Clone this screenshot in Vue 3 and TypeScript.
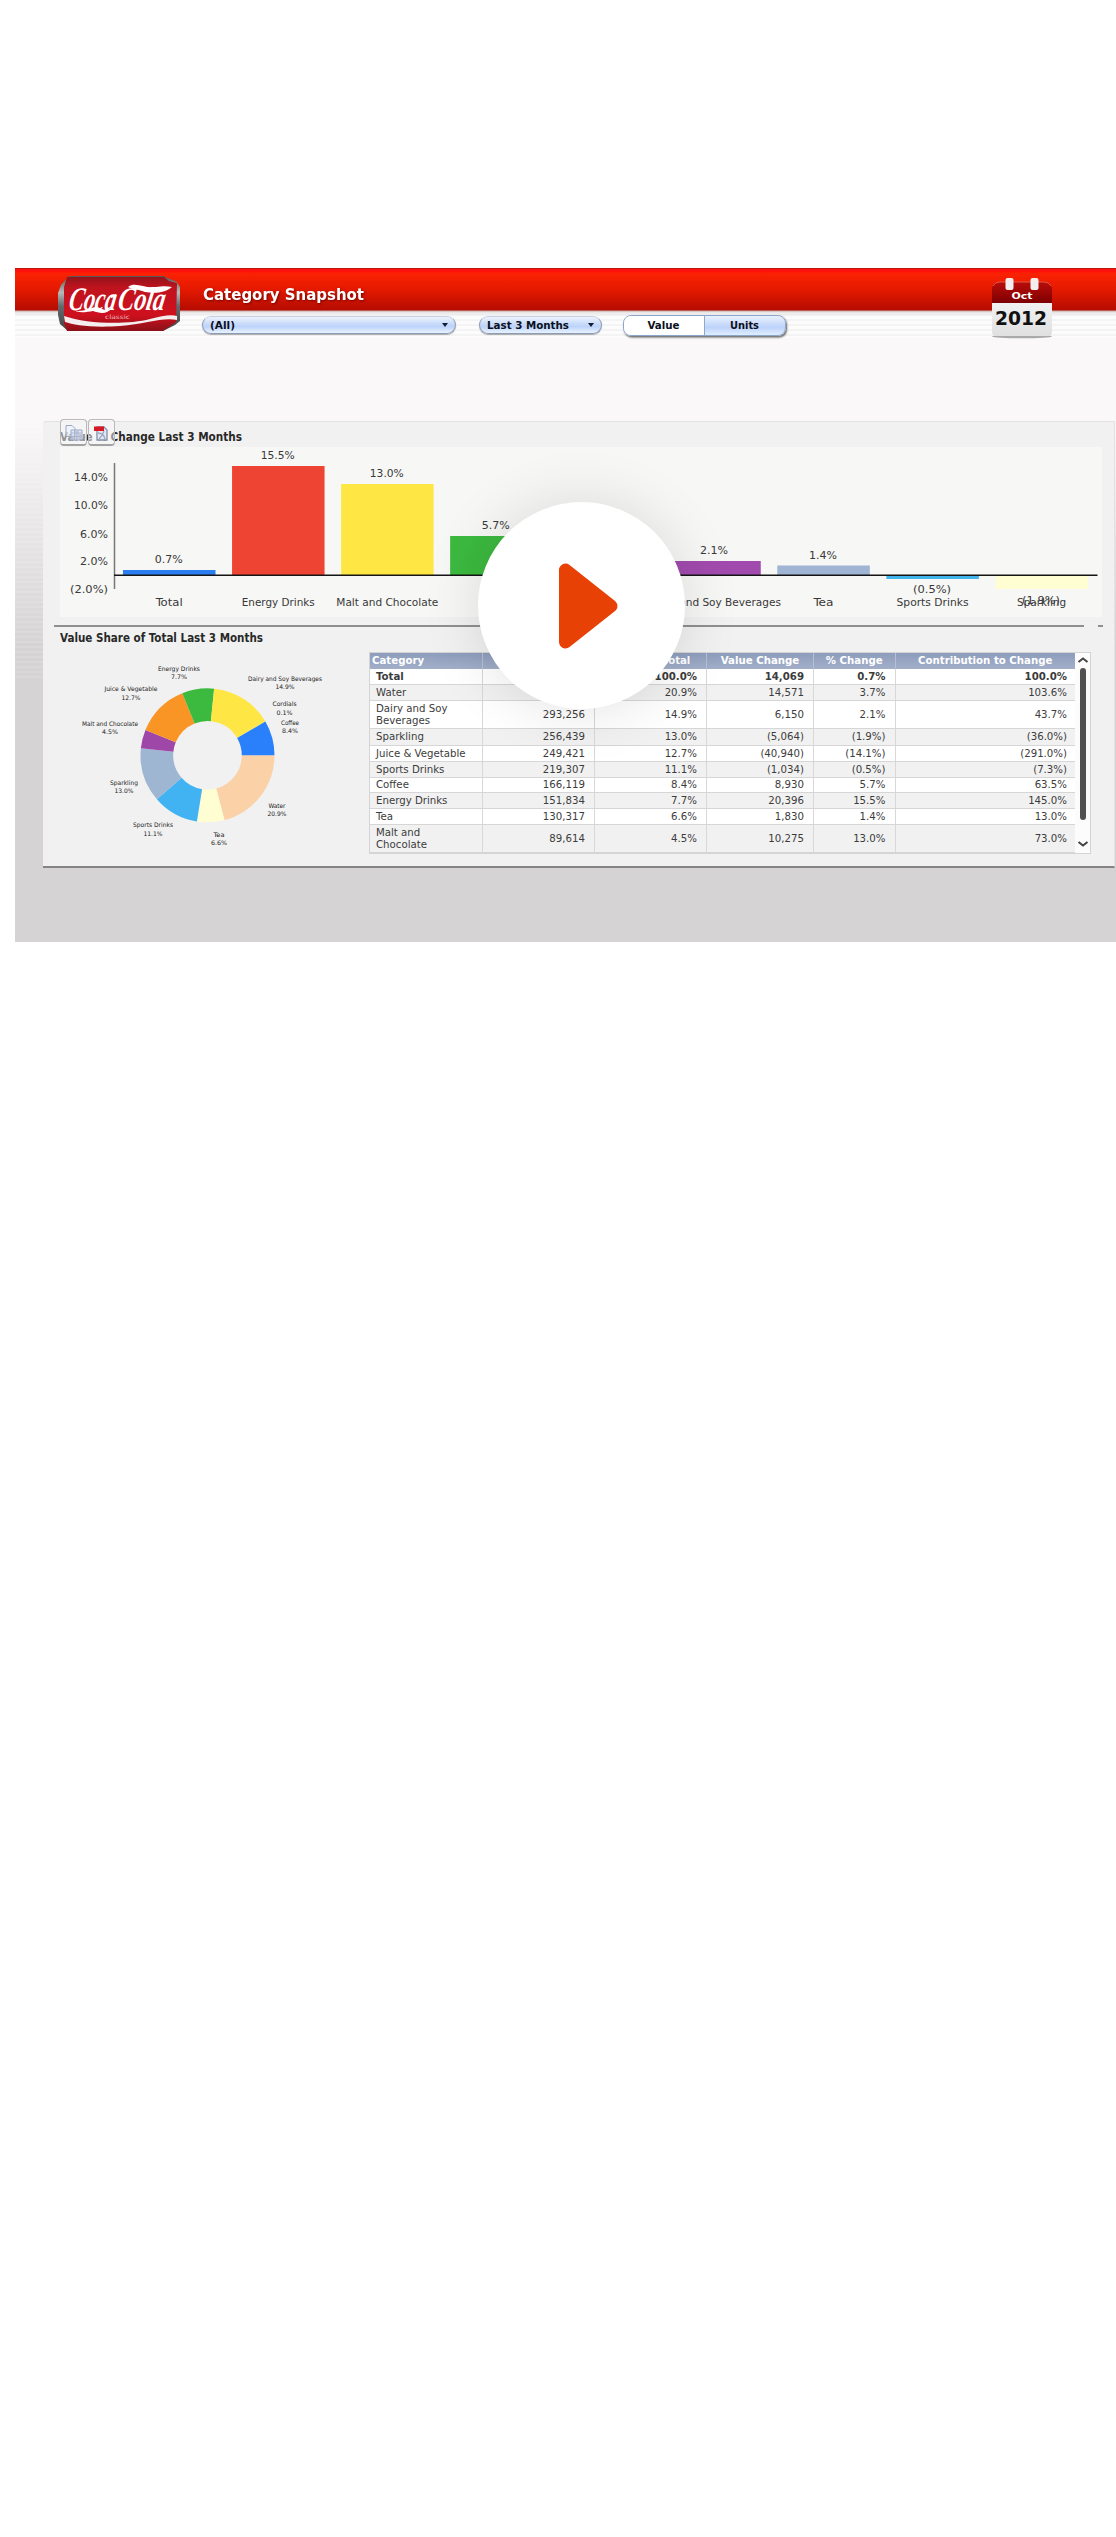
<script setup lang="ts">
interface Bar {
  name: string
  nameWidth: number
  value: string
  valueWidth: number
  slot: number
  top: number
  height: number
  color: string
  valueY: number
}

const bars: Bar[] = [
  { name: 'Total', nameWidth: 27, value: '0.7%', valueWidth: 28, slot: 0, top: 125, height: 5, color: '#2b7ef0', valueY: 118.5 },
  { name: 'Energy Drinks', nameWidth: 73, value: '15.5%', valueWidth: 34, slot: 1, top: 21, height: 109, color: '#ee4433', valueY: 14 },
  { name: 'Malt and Chocolate', nameWidth: 102, value: '13.0%', valueWidth: 34, slot: 2, top: 39, height: 91, color: '#fee745', valueY: 32.5 },
  { name: '', nameWidth: 1, value: '5.7%', valueWidth: 28, slot: 3, top: 91, height: 39, color: '#3cb93f', valueY: 84 },
  { name: 'Dairy and Soy Beverages', nameWidth: 133, value: '2.1%', valueWidth: 28, slot: 5, top: 116, height: 14, color: '#a14bae', valueY: 109.5 },
  { name: 'Tea', nameWidth: 20, value: '1.4%', valueWidth: 28, slot: 6, top: 120.5, height: 9.5, color: '#9fb5d3', valueY: 114 },
  { name: 'Sports Drinks', nameWidth: 72, value: '(0.5%)', valueWidth: 38, slot: 7, top: 131, height: 3, color: '#42b4ee', valueY: 148 },
  { name: 'Sparkling', nameWidth: 49, value: '(1.9%)', valueWidth: 38, slot: 8, top: 131, height: 13, color: '#fefed2', valueY: 159 },
]
const barX = (slot: number): number => 63 + slot * 109.05

const ticks = [
  { text: '14.0%', y: 35.5, w: 34 },
  { text: '10.0%', y: 63.5, w: 34 },
  { text: '6.0%', y: 92.5, w: 28 },
  { text: '2.0%', y: 120, w: 28 },
  { text: '(2.0%)', y: 148, w: 38 },
]

interface Share {
  name: string
  value: number
  color: string
  x: number
  y: number
  w: number
}

const shares: Share[] = [
  { name: 'Water', value: 20.9, color: '#fbd1a8', x: 217, y: 158, w: 17 },
  { name: 'Tea', value: 6.6, color: '#fefed2', x: 159, y: 187, w: 11 },
  { name: 'Sports Drinks', value: 11.1, color: '#42b3f2', x: 93, y: 177.5, w: 40 },
  { name: 'Sparkling', value: 13.0, color: '#9fb6d3', x: 64, y: 135, w: 28 },
  { name: 'Malt and Chocolate', value: 4.5, color: '#9e47a9', x: 50, y: 76, w: 56 },
  { name: 'Juice & Vegetable', value: 12.7, color: '#f99524', x: 71, y: 41.5, w: 53 },
  { name: 'Energy Drinks', value: 7.7, color: '#3cb93f', x: 119, y: 21, w: 42 },
  { name: 'Dairy and Soy Beverages', value: 14.9, color: '#fee745', x: 225, y: 31, w: 74 },
  { name: 'Cordials', value: 0.1, color: '#fee745', x: 224.5, y: 56.5, w: 24 },
  { name: 'Coffee', value: 8.4, color: '#2a7ffa', x: 230, y: 75, w: 18 },
]

const total = shares.reduce((sum, s) => sum + s.value, 0)
const CX = 147.5
const CY = 105.3

function slicePath(index: number): string {
  const before = shares.slice(0, index).reduce((sum, s) => sum + s.value, 0)
  const a = (before / total) * Math.PI * 2
  const b = ((before + shares[index].value) / total) * Math.PI * 2
  const at = (r: number, t: number) => `${(CX + r * Math.cos(t)).toFixed(2)} ${(CY + r * Math.sin(t)).toFixed(2)}`
  return `M${at(67, a)} A67 67 0 0 1 ${at(67, b)} L${at(34.3, b)} A34.3 34.3 0 0 0 ${at(34.3, a)}Z`
}

interface Row {
  cells: string[]
  h: number
}

const headings = ['Category', '', 'Share of Total', 'Value Change', '% Change', 'Contribution to Change']
const rows: Row[] = [
  { cells: ['Total', '', '100.0%', '14,069', '0.7%', '100.0%'], h: 16 },
  { cells: ['Water', '', '20.9%', '14,571', '3.7%', '103.6%'], h: 16 },
  { cells: ['Dairy and Soy Beverages', '293,256', '14.9%', '6,150', '2.1%', '43.7%'], h: 28 },
  { cells: ['Sparkling', '256,439', '13.0%', '(5,064)', '(1.9%)', '(36.0%)'], h: 17 },
  { cells: ['Juice & Vegetable', '249,421', '12.7%', '(40,940)', '(14.1%)', '(291.0%)'], h: 16 },
  { cells: ['Sports Drinks', '219,307', '11.1%', '(1,034)', '(0.5%)', '(7.3%)'], h: 16 },
  { cells: ['Coffee', '166,119', '8.4%', '8,930', '5.7%', '63.5%'], h: 15 },
  { cells: ['Energy Drinks', '151,834', '7.7%', '20,396', '15.5%', '145.0%'], h: 16 },
  { cells: ['Tea', '130,317', '6.6%', '1,830', '1.4%', '13.0%'], h: 16 },
  { cells: ['Malt and Chocolate', '89,614', '4.5%', '10,275', '13.0%', '73.0%'], h: 28 },
]
</script>

<template>
  <main class="page">
    <section class="video">
      <header class="top">
        <svg class="can" width="126" height="58" viewBox="0 0 126 58">
          <defs>
            <linearGradient id="canRed" x1="0" y1="0" x2="0" y2="1">
              <stop offset="0" stop-color="#93141b" />
              <stop offset=".2" stop-color="#c0131e" />
              <stop offset=".7" stop-color="#cf101e" />
              <stop offset="1" stop-color="#8c1118" />
            </linearGradient>
            <linearGradient id="canMetal" x1="0" y1="0" x2="0" y2="1">
              <stop offset="0" stop-color="#555" />
              <stop offset=".3" stop-color="#b9b9b9" />
              <stop offset=".55" stop-color="#63686c" />
              <stop offset="1" stop-color="#444" />
            </linearGradient>
          </defs>
          <path d="M4 10 L12 1 H106 L120 7 L123 12 V46 L118 50 L106 56 H11 L3 49 L1 40 V18Z" fill="url(#canMetal)" />
          <path d="M10 2 H107 L112 6 L120 8 L119 47 L106 56 H10 L7 48 V12Z" fill="url(#canRed)" />
          <path d="M7 41 C30 49 70 50 93 44 C105 41 114 39 120 41 V45 C106 42 88 49 63 51 C35 53 17 50 8 47Z" fill="#f5eeee" />
          <g transform="translate(7 0) skewX(-10)">
            <text x="10" y="35" textLength="47" lengthAdjust="spacingAndGlyphs" class="script">Coca</text>
            <text x="59" y="35" textLength="47" lengthAdjust="spacingAndGlyphs" class="script">Cola</text>
          </g>
          <path d="M15 34 C22 39 32 33 39 32 C46 33 46 37 55 33 C50 40 42 38 36 36 C29 37 21 39 15 34Z M71 12 C78 6 88 14 99 12 C106 11 110 11 115 12 C107 19 96 18 88 17 C80 14 75 14 71 12Z M54 20 l5 -1 v3 l-5 1z" fill="#fff" />
          <text x="48" y="43.500" textLength="25" lengthAdjust="spacingAndGlyphs" class="classic">classic</text>
        </svg>
        <div class="middle">
          <svg class="title" width="170" height="26"><text x="1" y="18" textLength="161" lengthAdjust="spacingAndGlyphs">Category Snapshot</text></svg>
          <div class="controls">
            <div class="select wide"><svg width="230" height="16"><text x="7" y="12" textLength="25" lengthAdjust="spacingAndGlyphs">(All)</text></svg><i class="arrow"></i></div>
            <div class="select period"><svg width="100" height="16"><text x="7" y="12" textLength="82" lengthAdjust="spacingAndGlyphs">Last 3 Months</text></svg><i class="arrow"></i></div>
            <div class="toggle">
              <div class="on"><svg width="34" height="16"><text x="0.5" y="12" textLength="32" lengthAdjust="spacingAndGlyphs">Value</text></svg></div>
              <div><svg width="32" height="16"><text x="1" y="12" textLength="29" lengthAdjust="spacingAndGlyphs">Units</text></svg></div>
            </div>
          </div>
        </div>
        <svg class="calendar" width="64" height="62" viewBox="0 0 64 62">
          <defs>
            <linearGradient id="calTop" x1="0" y1="0" x2="0" y2="1"><stop offset="0" stop-color="#b90d0b" /><stop offset="1" stop-color="#7d0000" /></linearGradient>
            <linearGradient id="calBody" x1="0" y1="0" x2="0" y2="1"><stop offset="0" stop-color="#f1f1f1" /><stop offset="1" stop-color="#e0e0e0" /></linearGradient>
          </defs>
          <ellipse cx="32" cy="58.500" rx="30" ry="1.800" fill="#aaa" />
          <path d="M2 25 H62 V54 Q62 58 58 58 H6 Q2 58 2 54Z" fill="url(#calBody)" />
          <path d="M2 25 V12 Q2 4 10 4 H54 Q62 4 62 12 V25Z" fill="url(#calTop)" />
          <path d="M3 8 Q5 4 10 4 H54 Q59 4 61 8" fill="none" stroke="#e06a5a" stroke-width=".8" />
          <rect x="15.500" y="0" width="8" height="12" rx="2" fill="#f2efee" />
          <rect x="40.500" y="0" width="8" height="12" rx="2" fill="#f2efee" />
          <text x="21.500" y="21" textLength="21" lengthAdjust="spacingAndGlyphs" class="month">Oct</text>
          <text x="5" y="47" textLength="52" lengthAdjust="spacingAndGlyphs" class="year">2012</text>
        </svg>
      </header>

      <div class="panel">
        <div class="heading">
          <svg width="200" height="26"><text x="0" y="19" textLength="182" lengthAdjust="spacingAndGlyphs">Value % Change Last 3 Months</text></svg>
          <div class="tools">
            <span><svg width="27" height="27" viewBox="0 0 27 27"><path d="M6 6.500h6l3 3v8H6z" fill="#edf1fb" fill-opacity=".6" stroke="#9aa7c6" /><path d="M11 11h11v10H11z" fill="#dbe3f5" fill-opacity=".6" stroke="#9aa7c6" /><path d="M11 14h11M11 17.500h11M14.500 11v10M18 11v10" stroke="#a9b6d2" /></svg></span>
            <span><svg width="27" height="27" viewBox="0 0 27 27"><path d="M9 8h7l3 3v10H9z" fill="#e4e8f2" stroke="#8790a8" stroke-width="1.300" /><path d="M10 14c4 0 6 2 7 6M11 20c2-2 4-4 5-8" stroke="#9ba7c8" stroke-width="1.300" fill="none" /><path d="M6 7.500h10v4.500H6z" fill="#d91824" /></svg></span>
          </div>
        </div>
        <svg class="bars" width="1042" height="170">
          <path d="M54.500 16V142" stroke="#777" stroke-width="1.500" />
          <template v-for="t in ticks" :key="t.text">
            <text :x="48 - t.w" :y="t.y - 2" :textLength="t.w" lengthAdjust="spacingAndGlyphs">{{ t.text }}</text>
          </template>
          <g v-for="b in bars" :key="b.slot">
            <rect :x="barX(b.slot)" :y="b.top - 2" width="92.500" :height="b.height" :fill="b.color" />
            <text :x="barX(b.slot) + 45.7 - b.valueWidth / 2" :y="b.valueY - 2.5" :textLength="b.valueWidth" lengthAdjust="spacingAndGlyphs">{{ b.value }}</text>
            <text v-if="b.name" :x="barX(b.slot) + 46.2 - b.nameWidth / 2" y="159" :textLength="b.nameWidth" lengthAdjust="spacingAndGlyphs">{{ b.name }}</text>
          </g>
          <path d="M54 128.300H1037.500" stroke="#151515" stroke-width="1.600" />
        </svg>
        <div class="rule"><i></i><b></b></div>
        <div class="lower">
          <div class="share">
            <svg class="subtitle" width="220" height="22"><text x="0" y="14" textLength="203" lengthAdjust="spacingAndGlyphs">Value Share of Total Last 3 Months</text></svg>
            <svg class="pie" width="300" height="205">
              <path v-for="(s, i) in shares" :key="s.name" :d="slicePath(i)" :fill="s.color" />
              <g v-for="s in shares" :key="s.name">
                <text :x="s.x - s.w / 2" :y="s.y - 0.5" :textLength="s.w" lengthAdjust="spacingAndGlyphs">{{ s.name }}</text>
                <text :x="s.x - (s.value >= 10 ? 9.5 : 8)" :y="s.y + 8" :textLength="s.value >= 10 ? 19 : 16" lengthAdjust="spacingAndGlyphs">{{ s.value.toFixed(1) }}%</text>
              </g>
            </svg>
          </div>
          <div class="grid">
            <div class="table">
              <div class="row head"><span v-for="(h, i) in headings" :key="i">{{ h }}</span></div>
              <div v-for="(r, i) in rows" :key="i" class="row" :class="{ total: i === 0, odd: i % 2 === 1 }" :style="{ height: r.h + 'px' }">
                <span v-for="(c, j) in r.cells" :key="j">{{ c }}</span>
              </div>
            </div>
            <div class="scroll">
              <svg width="12" height="8"><path d="M1.500 6L6 2.500L10.500 6" fill="none" stroke="#444" stroke-width="2" /></svg>
              <i></i>
              <svg width="12" height="8"><path d="M1.500 2L6 5.500L10.500 2" fill="none" stroke="#444" stroke-width="2" /></svg>
            </div>
          </div>
        </div>
      </div>

      <button class="play" aria-label="Play video">
        <svg width="60" height="86" viewBox="0 0 60 86"><path d="M7.500 7 L53 43 L7.500 79Z" fill="#e84105" stroke="#e84105" stroke-width="13" stroke-linejoin="round" /></svg>
      </button>
    </section>
  </main>
</template>

<style>
body {
  background: #fff;
}
</style>

<style scoped>
.page {
  box-sizing: border-box;
  width: 1116px;
  height: 2537px;
  padding: 268px 0 0 15px;
  overflow: hidden;
  font-family: "DejaVu Sans Condensed", "DejaVu Sans", sans-serif;
  color: #333;
}
.page svg {
  display: block;
  flex: none;
  overflow: visible;
}
.video {
  position: relative;
  box-sizing: border-box;
  width: 1101px;
  height: 674px;
  overflow: hidden;
  background:
    repeating-linear-gradient(180deg, transparent 0 3px, rgba(255, 255, 255, 0.12) 3px 5px) 0 150px / 28px 260px no-repeat,
    linear-gradient(180deg, #faf8f9 0, #faf8f9 150px, #d5d3d4 380px, #d5d3d4 100%);
}
.top {
  display: flex;
  align-items: flex-start;
  height: 153px;
  background:
    linear-gradient(180deg, #7d1a14 0, #ff120b 1px, #ff120b 4px, #fb2203 5px, #e31900 22px, #b50c00 42px, #c9a9a5 43px, #e5e2e2 44px, transparent 48px) 0 0 / 100% 48px no-repeat,
    repeating-linear-gradient(180deg, #fdfcfc 0 3px, #f5f4f4 3px 5px) 0 43px / 100% 27px no-repeat,
    #faf8f9;
}
.can {
  margin: 7px 0 0 42px;
}
.script {
  font: italic bold 33px "Liberation Serif", serif;
  fill: #fff;
}
.classic {
  font: 6px "DejaVu Sans", sans-serif;
  fill: #f0b9b9;
}
.middle {
  width: 586px;
  padding: 14px 0 0 19px;
}
.title {
  font-size: 16px;
  font-weight: bold;
  fill: #fff;
  filter: drop-shadow(1px 1px 1px rgba(80, 0, 0, 0.7));
}
.controls {
  display: flex;
  align-items: center;
  height: 26px;
  margin-top: 4px;
}
.controls text {
  font-size: 11px;
  font-weight: bold;
  fill: #0b1020;
}
.select {
  display: flex;
  align-items: center;
  justify-content: space-between;
  box-sizing: border-box;
  height: 18px;
  border: 1px solid #8d9ab5;
  border-top-color: #c5d0e2;
  border-radius: 9px;
  background: linear-gradient(180deg, #eef3fc 0, #c6d9fa 45%, #bdd3fa 60%, #e8f3ff 100%);
  box-shadow: 0 1px 1px #aaa;
}
.wide {
  width: 254px;
}
.period {
  width: 123px;
  margin-left: 23px;
}
.arrow {
  width: 0;
  margin-right: 7px;
  border: 3px solid transparent;
  border-top: 4px solid #111c35;
  border-bottom: 0;
}
.toggle {
  display: flex;
  box-sizing: border-box;
  width: 163px;
  height: 21px;
  margin-left: 21px;
  border: 1px solid #8aa6ca;
  border-radius: 8px;
  background: linear-gradient(180deg, #eaf1fc, #bdd3fb 60%, #dfedff);
  box-shadow: 1px 1.5px 2px #666;
  overflow: hidden;
}
.toggle div {
  display: flex;
  flex: 1;
  align-items: center;
  justify-content: center;
}
.toggle .on {
  background: #fff;
  border-right: 1.5px solid #8fa9c9;
}
.calendar {
  margin: 10px 0 0 202px;
}
.month {
  font: bold 9px "DejaVu Sans", sans-serif;
  fill: #fff;
}
.year {
  font: bold 20px "DejaVu Sans", sans-serif;
  fill: #111;
}
.panel {
  box-sizing: border-box;
  width: 1072px;
  height: 447px;
  margin-left: 28px;
  border-top: 1px solid #e3e2e2;
  border-right: 1px solid #e3e2e2;
  border-bottom: 2px solid #858585;
  border-radius: 3px 0 0 0;
  background: #f1f1f1;
}
.heading {
  position: relative;
  height: 25px;
  padding-left: 17px;
}
.heading text,
.subtitle text {
  font-size: 11.500px;
  font-weight: bold;
  fill: #282828;
}
.tools {
  position: absolute;
  left: 17px;
  top: -3px;
  display: flex;
  gap: 1px;
}
.tools span {
  box-sizing: border-box;
  width: 27px;
  height: 27px;
  border: 1px solid #b9b9b9;
  border-bottom: 2px solid #a3a3a3;
  border-radius: 4px;
  background: rgba(250, 250, 252, 0.5);
}
.tools svg {
  margin: -1px;
}
.bars {
  margin-left: 17px;
  background: #f7f7f5;
}
.bars text {
  font-size: 11px;
  fill: #393939;
}
.rule {
  display: flex;
  gap: 14px;
  margin: 8px 0 0 11px;
}
.rule i {
  width: 1030px;
  height: 2px;
  background: #8f8f8f;
}
.rule b {
  width: 5px;
  height: 2px;
  background: #8f8f8f;
}
.lower {
  display: flex;
  height: 230px;
}
.share {
  width: 326px;
  padding: 1px 0 0 17px;
  box-sizing: border-box;
}
.pie text {
  font: 6.200px "DejaVu Sans Condensed", sans-serif;
  fill: #222;
}
.grid {
  display: flex;
  box-sizing: border-box;
  width: 722px;
  height: 202px;
  margin-top: 25px;
  border: 1px solid #d4d4d4;
  background: #fcfcfc;
}
.table {
  width: 705px;
  font: 10.200px/12px "DejaVu Sans", sans-serif;
  color: #3c3c3c;
}
.row {
  display: grid;
  grid-template-columns: 112.500px 112.500px 112px 107px 81.500px 179.500px;
  box-sizing: border-box;
  border-bottom: 1px solid #d6d6d6;
  background: #fff;
}
.row.odd {
  background: #f1f1f1;
}
.row span {
  display: flex;
  align-items: center;
  justify-content: flex-end;
  padding-right: 9px;
  border-right: 1px solid #d8d8d8;
}
.row span:first-child {
  justify-content: flex-start;
  padding: 0 10px 0 6px;
}
.row.total {
  font-weight: bold;
}
.row.head {
  height: 16px;
  border: 0;
  background: linear-gradient(180deg, #8e9dbd, #a3afc9);
  color: #fff;
  font-weight: bold;
  font-size: 10.200px;
}
.row.head span {
  justify-content: center;
  padding: 0;
  border-color: #b7c0d3;
}
.row.head span:first-child {
  justify-content: flex-start;
  padding-left: 2px;
}
.row span:last-child {
  border-right: 0;
  padding-right: 8px;
}
.row.head span:last-child {
  padding: 0;
}
.scroll {
  display: flex;
  flex-direction: column;
  align-items: center;
  width: 15px;
  padding-top: 3px;
}
.scroll i {
  width: 6px;
  height: 152px;
  margin: 4px 0 20px;
  border-radius: 3px;
  background: #505050;
}
.play {
  position: absolute;
  left: 463px;
  top: 234px;
  display: flex;
  align-items: center;
  width: 207px;
  height: 207px;
  padding: 0 0 0 80px;
  border: 0;
  border-radius: 50%;
  background: #fff;
  box-shadow: 0 0 60px rgba(0, 0, 0, 0.12);
}
</style>
